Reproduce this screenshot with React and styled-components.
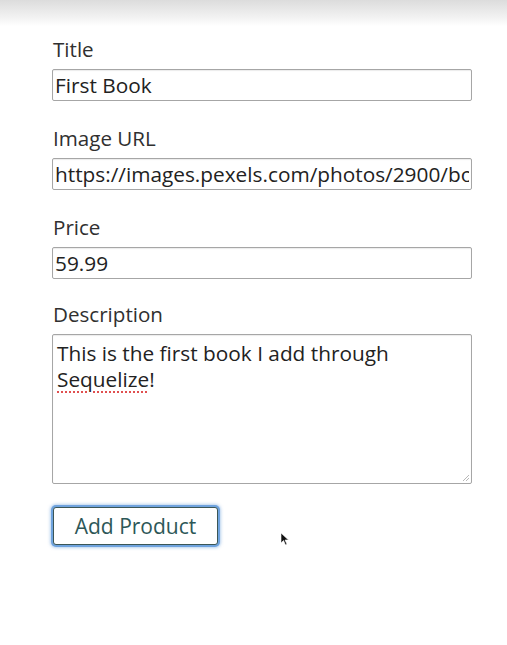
import React from "react";
import styled, { createGlobalStyle } from "styled-components";

const GlobalStyle = createGlobalStyle`
  html, body {
    margin: 0;
    padding: 0;
    background: #ffffff;
  }
  body {
    font-family: "Open Sans", "Liberation Sans", sans-serif;
  }
`;

/**
 * Styling
 */

const Page = styled.div`
  position: relative;
  width: 507px;
  height: 645px;
  overflow: hidden;
  background: #ffffff;
`;

const TopShade = styled.div`
  height: 26px;
  background: linear-gradient(#dcdcdc, #f3f3f3 70%, #ffffff);
`;

const Form = styled.form`
  display: flex;
  flex-direction: column;
  padding: 10px 0 0 52px;
  width: 420px;
`;

const FormGroup = styled.div`
  display: flex;
  flex-direction: column;
  margin-bottom: ${props => props.$gap || 24}px;
`;

const Label = styled.label`
  color: #303030;
  font-size: 20.6px;
  line-height: 27px;
  margin-bottom: 6px;
  padding-left: 1px;
`;

const TextInput = styled.input`
  box-sizing: border-box;
  width: 420px;
  height: 32px;
  margin: 0;
  padding: 0 2px;
  border: 1px solid #a6a6a6;
  border-radius: 2px;
  box-shadow: inset 0 1px 1px rgba(0, 0, 0, 0.08);
  color: #222222;
  font-family: "Open Sans", "Liberation Sans", sans-serif;
  font-size: 20.8px;
  outline: none;
  background: #ffffff;
`;

const TextBox = styled.div`
  position: relative;
  box-sizing: border-box;
  width: 420px;
  height: 150px;
  padding: 5px 4px;
  border: 1px solid #a6a6a6;
  border-radius: 2px;
  box-shadow: inset 0 1px 1px rgba(0, 0, 0, 0.08);
  color: #222222;
  font-size: 20.8px;
  line-height: 26px;
  outline: none;
  overflow: hidden;
`;

const Misspelled = styled.span`
  text-decoration: underline dotted #e05050;
  text-decoration-thickness: 2px;
  text-underline-offset: 4px;
`;

const Grip = styled.svg`
  position: absolute;
  right: 1px;
  bottom: 1px;
`;

const SubmitButton = styled.button`
  box-sizing: border-box;
  align-self: flex-start;
  width: 165px;
  height: 38px;
  margin-left: 1px;
  padding: 0;
  border: 1px solid #3b5656;
  border-radius: 3px;
  background: #ffffff;
  box-shadow: 0 0 0 2px #6fa3de, 0 0 3px 3px rgba(111, 163, 222, 0.5);
  color: #2d5757;
  font-family: "Open Sans", "Liberation Sans", sans-serif;
  font-size: 21px;
  cursor: pointer;
`;

const Pointer = styled.svg`
  position: absolute;
  left: 280px;
  top: 532px;
`;

function App() {
  return (
    <Page>
      <GlobalStyle />
      <TopShade />
      <Form onSubmit={evt => evt.preventDefault()}>
        <FormGroup>
          <Label htmlFor="title">Title</Label>
          <TextInput id="title" type="text" defaultValue="First Book" />
        </FormGroup>
        <FormGroup>
          <Label htmlFor="imageUrl">Image URL</Label>
          <TextInput
            id="imageUrl"
            type="text"
            defaultValue="https://images.pexels.com/photos/2900/books-old-book-library.jpg"
          />
        </FormGroup>
        <FormGroup $gap={22}>
          <Label htmlFor="price">Price</Label>
          <TextInput id="price" type="number" defaultValue="59.99" />
        </FormGroup>
        <FormGroup $gap={23}>
          <Label>Description</Label>
          <TextBox role="textbox" aria-multiline="true">
            This is the first book I add through <Misspelled>Sequelize</Misspelled>!
            <Grip width="9" height="9" viewBox="0 0 9 9">
              <path d="M8 2 L2 8 M8 5 L5 8" stroke="#b8b8b8" strokeWidth="1" />
            </Grip>
          </TextBox>
        </FormGroup>
        <SubmitButton type="submit">Add Product</SubmitButton>
      </Form>
      <Pointer width="10" height="14" viewBox="0 0 10 14">
        <path d="M1 1 L1 11 L3.5 8.5 L5.5 13 L7 12.3 L5 8 L8.5 8 Z" fill="#111" stroke="#fff" strokeWidth="0.6" />
      </Pointer>
    </Page>
  );
}

export default App;
